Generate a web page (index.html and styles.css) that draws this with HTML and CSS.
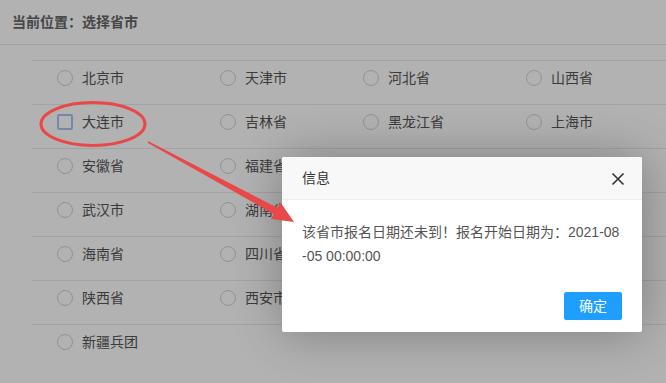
FILE: index.html
```html
<!DOCTYPE html>
<html lang="zh-CN">
<head>
<meta charset="utf-8">
<title>选择省市</title>
<link rel="stylesheet" href="styles.css">
</head>
<body>
<div class="page">
  <div class="crumb">当前位置：选择省市</div>
  <div class="list">
    <div class="row">
      <label class="item"><span class="radio"></span><span class="name">北京市</span></label>
      <label class="item"><span class="radio"></span><span class="name">天津市</span></label>
      <label class="item"><span class="radio"></span><span class="name">河北省</span></label>
      <label class="item"><span class="radio"></span><span class="name">山西省</span></label>
    </div>
    <div class="row">
      <label class="item"><span class="radio focus"></span><span class="name">大连市</span></label>
      <label class="item"><span class="radio"></span><span class="name">吉林省</span></label>
      <label class="item"><span class="radio"></span><span class="name">黑龙江省</span></label>
      <label class="item"><span class="radio"></span><span class="name">上海市</span></label>
    </div>
    <div class="row">
      <label class="item"><span class="radio"></span><span class="name">安徽省</span></label>
      <label class="item"><span class="radio"></span><span class="name">福建省</span></label>
    </div>
    <div class="row">
      <label class="item"><span class="radio"></span><span class="name">武汉市</span></label>
      <label class="item"><span class="radio"></span><span class="name">湖南省</span></label>
    </div>
    <div class="row">
      <label class="item"><span class="radio"></span><span class="name">海南省</span></label>
      <label class="item"><span class="radio"></span><span class="name">四川省</span></label>
    </div>
    <div class="row">
      <label class="item"><span class="radio"></span><span class="name">陕西省</span></label>
      <label class="item"><span class="radio"></span><span class="name">西安市</span></label>
    </div>
    <div class="row">
      <label class="item"><span class="radio"></span><span class="name">新疆兵团</span></label>
    </div>
  </div>
</div>

<div class="shade"></div>

<div class="layer">
  <div class="layer-title">信息
    <span class="layer-close">
      <svg width="14" height="14" viewBox="0 0 14 14"><path d="M1.5 1.5 L12.5 12.5 M12.5 1.5 L1.5 12.5" stroke="#333" stroke-width="1.6" fill="none"/></svg>
    </span>
  </div>
  <div class="layer-content">该省市报名日期还未到！报名开始日期为：2021-08-05 00:00:00</div>
  <div class="layer-btns"><a class="btn">确定</a></div>
</div>

<svg class="annot" width="666" height="383" viewBox="0 0 666 383">
  <ellipse cx="93" cy="124" rx="52" ry="21.5" fill="none" stroke="#e94848" stroke-width="3"/>
  <polygon fill="#e94848" points="148.4,141.3 277.2,207.8 280.5,202.6 294,222 271,219 273.8,214.2 147.6,142.7"/>
</svg>
</body>
</html>
```
FILE: styles.css
```css
* { box-sizing: border-box; }
html, body { margin: 0; padding: 0; }
body {
  width: 666px;
  height: 383px;
  overflow: hidden;
  background: #fff;
  font-family: "Liberation Sans", "Noto Sans CJK SC", sans-serif;
  font-size: 14px;
  color: #555;
  position: relative;
}
.crumb {
  height: 45px;
  line-height: 44px;
  padding-left: 12px;
  border-bottom: 1px solid #e6e6e6;
  font-weight: bold;
  color: #666;
}
.list {
  margin: 15px 0 0 32px;
}
.row {
  display: grid;
  grid-template-columns: 163px 143px 163px 1fr;
  height: 44px;
  padding-top: 9px;
  border-top: 1px solid #eaeaea;
  align-items: start;
}
.item {
  display: flex;
  align-items: center;
  padding-left: 25px;
  height: 16px;
}
.radio {
  width: 16px;
  height: 16px;
  border: 1px solid #d2d2d2;
  border-radius: 50%;
  flex: none;
}
.radio.focus {
  border-radius: 2px;
  border: 2px solid #a8c2f4;
}
.name {
  margin-left: 9px;
  line-height: 16px;
  white-space: nowrap;
}
.shade {
  position: absolute;
  left: 0; top: 0;
  width: 666px; height: 383px;
  background: rgba(0, 0, 0, 0.3);
}
.layer {
  position: absolute;
  left: 282px;
  top: 157px;
  width: 360px;
  background: #fff;
  border-radius: 2px;
  box-shadow: 1px 1px 50px rgba(0, 0, 0, 0.3);
}
.layer-title {
  position: relative;
  height: 43px;
  line-height: 42px;
  padding: 0 80px 0 20px;
  background: #f8f8f8;
  border-bottom: 1px solid #eee;
  border-radius: 2px 2px 0 0;
  color: #333;
  font-size: 14px;
}
.layer-close {
  position: absolute;
  left: 329px;
  top: 15px;
  width: 14px;
  height: 14px;
  display: block;
}
.layer-close svg { display: block; }
.layer-content {
  padding: 20px 20px 19px;
  line-height: 24px;
  color: #555;
  word-break: break-all;
}
.layer-btns {
  display: flex;
  justify-content: flex-end;
  padding: 5px 20px 12px;
}
.btn {
  display: block;
  height: 28px;
  line-height: 28px;
  padding: 0 15px;
  background: #1e9fff;
  color: #fff;
  border-radius: 2px;
  font-size: 14px;
}
.annot {
  position: absolute;
  left: 0; top: 0;
  pointer-events: none;
}
```
